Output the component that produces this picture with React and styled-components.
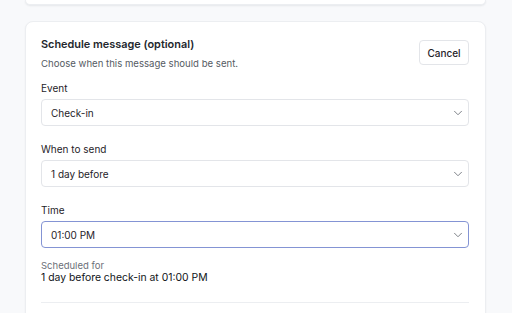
import React from 'react'
import styled, { createGlobalStyle } from 'styled-components'
import { ChevronDown } from 'lucide-react'

const GlobalStyle = createGlobalStyle`
    html, body {
        margin: 0;
        padding: 0;
        background: #f8f9fb;
        font-family: Inter, "Noto Sans", "Liberation Sans", sans-serif;
        color: #1f2329;
        overflow: hidden;
    }
    * {
        box-sizing: border-box;
    }
`

const Page = styled.div`
    display: flex;
    flex-direction: column;
    gap: 16px;
    padding: 0 26px 0 25px;
`

const TopCard = styled.div`
    flex-shrink: 0;
    height: 5px;
    background: #fff;
    border-radius: 0 0 8px 8px;
    box-shadow: 0 1px 2px rgba(16, 24, 40, 0.08);
    border: 1px solid #eceef1;
    border-top: none;
`

const Card = styled.div`
    flex-shrink: 0;
    background: #fff;
    border-radius: 8px;
    border: 1px solid #eceef1;
    box-shadow: 0 1px 2px rgba(16, 24, 40, 0.06);
    padding: 14px 16px 24px 15px;
`

const Header = styled.div`
    display: flex;
    justify-content: space-between;
    align-items: flex-start;
    margin-bottom: 8px;
`

const Title = styled.h3`
    margin: 0;
    font-size: 10.9px;
    line-height: 16px;
    font-weight: 600;
    color: #23272d;
`

const Subtitle = styled.p`
    margin: 4px 0 0;
    font-size: 9.6px;
    line-height: 16px;
    color: #555b63;
`

const Button = styled.button`
    margin-top: 4px;
    height: 25px;
    width: 50px;
    padding: 0;
    border: 1px solid #e3e5e9;
    border-radius: 4px;
    background: #fff;
    font-family: inherit;
    font-size: 10px;
    font-weight: 500;
    color: #1f2329;
`

const Field = styled.div`
    display: flex;
    flex-direction: column;
    margin-bottom: 15px;
`

const Label = styled.label`
    font-size: 10px;
    line-height: 16px;
    margin-bottom: 3px;
    color: #1f2329;
`

const SelectBox = styled.div`
    height: 27px;
    display: flex;
    align-items: center;
    justify-content: space-between;
    padding: 0 3px 0 9px;
    border: 1px solid ${props => (props.$focused ? '#8494d4' : '#e3e5e9')};
    border-radius: 4px;
    background: #fff;
    font-size: 10px;
    color: #1f2329;
    svg {
        color: #6b7078;
    }
`

const Summary = styled.div`
    margin-top: -3px;
    line-height: 12px;
`

const SummaryLabel = styled.div`
    font-size: 9.5px;
    color: #6b7078;
`

const SummaryValue = styled.div`
    font-size: 10.4px;
    color: #111418;
`

const Divider = styled.hr`
    margin: 18px 0 0;
    border: none;
    border-top: 1px solid #eceef1;
`

const fields = [
    { label: 'Event', value: 'Check-in' },
    { label: 'When to send', value: '1 day before' },
    { label: 'Time', value: '01:00 PM', focused: true },
]

const App = () => {
    return (
        <>
            <GlobalStyle />
            <Page>
                <TopCard />
                <Card>
                    <Header>
                        <div>
                            <Title>Schedule message (optional)</Title>
                            <Subtitle>Choose when this message should be sent.</Subtitle>
                        </div>
                        <Button>Cancel</Button>
                    </Header>
                    {fields.map(field => (
                        <Field key={field.label}>
                            <Label>{field.label}</Label>
                            <SelectBox $focused={field.focused}>
                                <span>{field.value}</span>
                                <ChevronDown size={14} strokeWidth={1.5} />
                            </SelectBox>
                        </Field>
                    ))}
                    <Summary>
                        <SummaryLabel>Scheduled for</SummaryLabel>
                        <SummaryValue>1 day before check-in at 01:00 PM</SummaryValue>
                    </Summary>
                    <Divider />
                </Card>
            </Page>
        </>
    )
}

export default App
